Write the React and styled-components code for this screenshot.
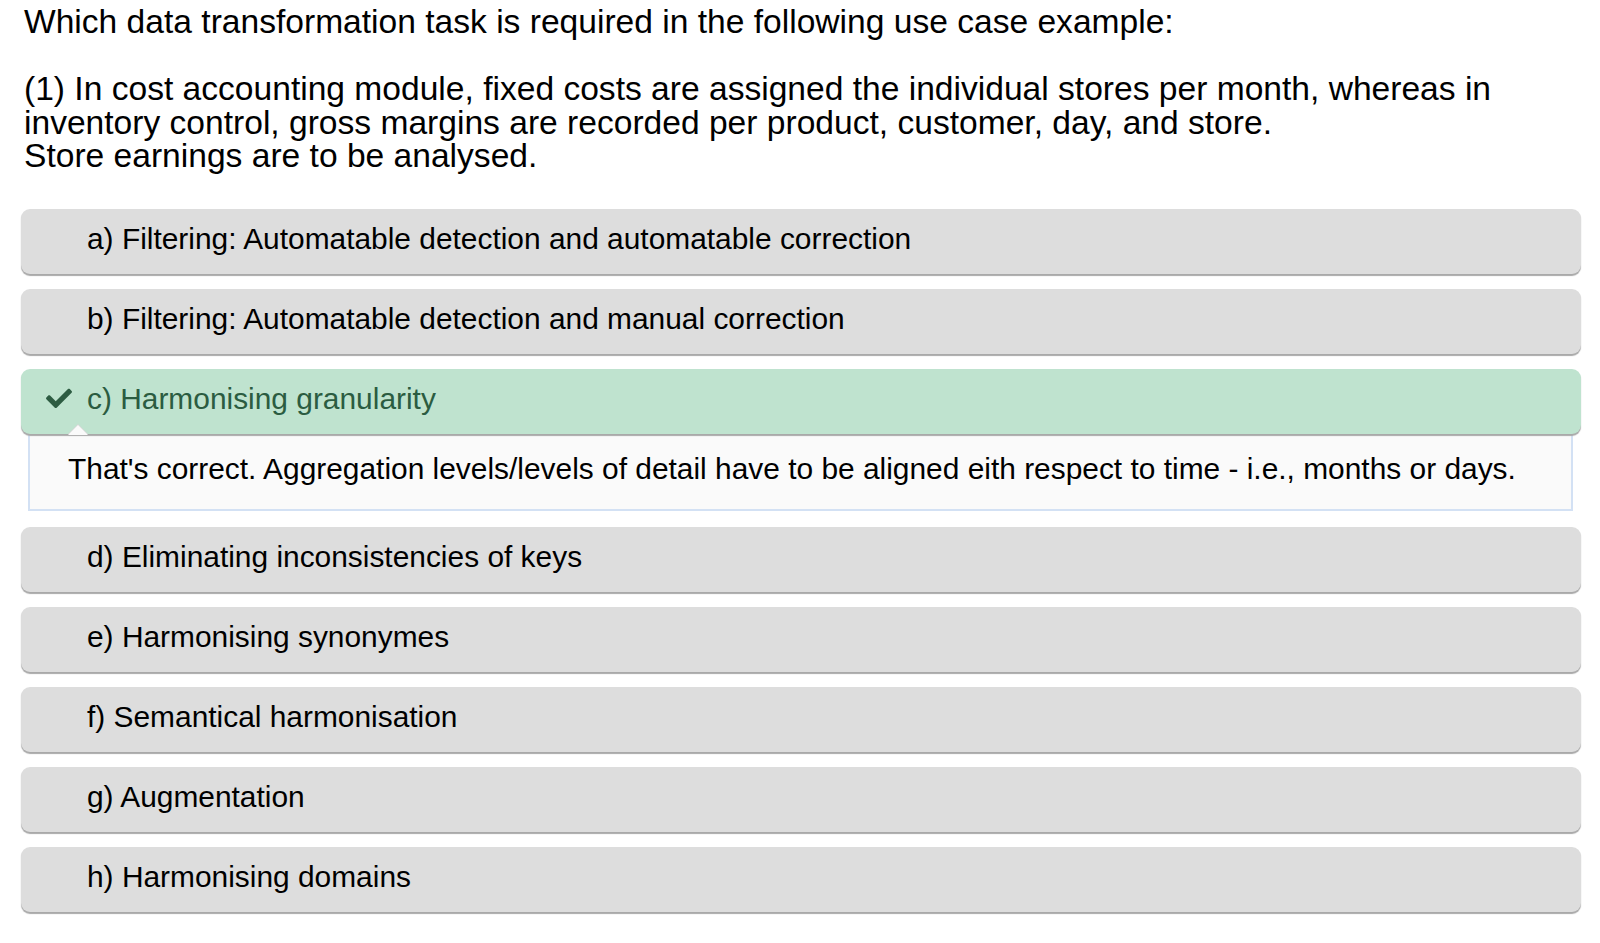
import React from "react";
import styled, { createGlobalStyle } from "styled-components";
import { FaCheck } from "react-icons/fa";

const Global = createGlobalStyle`
  html, body { margin: 0; padding: 0; background: #ffffff; }
  body { font-family: "Liberation Sans", Arial, Helvetica, sans-serif; color: #000; }
`;

const Page = styled.div`
  padding: 5px 19px 20px 21px;
`;

const Question = styled.div`
  font-size: 33.6px;
  line-height: 33.5px;
  padding-left: 3px;
  margin-bottom: 36px;
`;

const Options = styled.div`
  display: flex;
  flex-direction: column;
`;

const Option = styled.div`
  position: relative;
  display: flex;
  align-items: center;
  height: 65px;
  box-sizing: border-box;
  padding: 0 0 5px 66px;
  margin-bottom: ${(p) => (p.$open ? "0" : "15px")};
  border-radius: 9px;
  background: ${(p) => (p.$correct ? "#bfe3cf" : "#dddddd")};
  color: ${(p) => (p.$correct ? "#2b5c41" : "#000")};
  box-shadow: 0 2px 1px #a9a9a9;
  font-size: 29.9px;
  line-height: 34px;
  z-index: 1;
`;

const CheckMark = styled.span`
  position: absolute;
  left: 25px;
  top: 50%;
  transform: translateY(-60%);
  display: flex;
  color: #2d5c42;
  font-size: 26px;
`;

const Caret = styled.span`
  position: absolute;
  left: 47px;
  bottom: -1px;
  width: 0;
  height: 0;
  border-left: 10px solid transparent;
  border-right: 10px solid transparent;
  border-bottom: 10px solid #fafafa;
  filter: drop-shadow(0 -1px 0 #d6d6d6);
`;

const Feedback = styled.div`
  margin: 0 8px 16px 7px;
  height: 77px;
  box-sizing: border-box;
  display: flex;
  align-items: center;
  padding: 0 0 4px 38px;
  background: #fafafa;
  border: 2px solid #d3e1f4;
  border-top: none;
  font-size: 29.9px;
  line-height: 34px;
  color: #000;
`;

const options = [
  { label: "a) Filtering: Automatable detection and automatable correction" },
  { label: "b) Filtering: Automatable detection and manual correction" },
  {
    label: "c) Harmonising granularity",
    correct: true,
    feedback:
      "That's correct. Aggregation levels/levels of detail have to be aligned eith respect to time - i.e., months or days.",
  },
  { label: "d) Eliminating inconsistencies of keys" },
  { label: "e) Harmonising synonymes" },
  { label: "f) Semantical harmonisation" },
  { label: "g) Augmentation" },
  { label: "h) Harmonising domains" },
];

export default function App() {
  return (
    <>
      <Global />
      <Page>
        <Question>
          Which data transformation task is required in the following use case example:
          <br />
          <br />
          (1) In cost accounting module, fixed costs are assigned the individual stores per month, whereas in
          <br />
          inventory control, gross margins are recorded per product, customer, day, and store.
          <br />
          Store earnings are to be analysed.
        </Question>
        <Options>
          {options.map((o) => (
            <React.Fragment key={o.label}>
              <Option $correct={o.correct} $open={!!o.feedback}>
                {o.correct && (
                  <CheckMark>
                    <FaCheck />
                  </CheckMark>
                )}
                {o.label}
                {o.feedback && <Caret />}
              </Option>
              {o.feedback && <Feedback>{o.feedback}</Feedback>}
            </React.Fragment>
          ))}
        </Options>
      </Page>
    </>
  );
}
